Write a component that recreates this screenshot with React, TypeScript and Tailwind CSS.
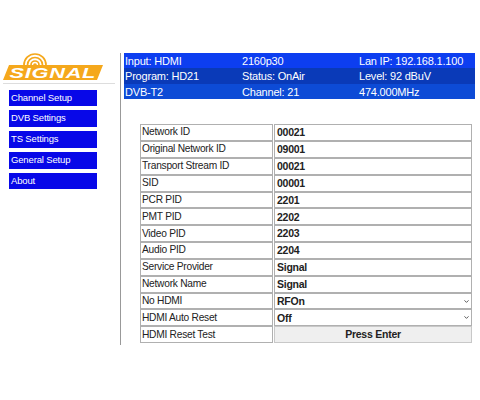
import React from 'react';
import { ChevronDown } from 'lucide-react';

const menu = ['Channel Setup', 'DVB Settings', 'TS Settings', 'General Setup', 'About'];

const status = [
  { bg: 'bg-[#0d3ef0]', cells: ['Input: HDMI', '2160p30', 'Lan IP: 192.168.1.100'] },
  { bg: 'bg-[#0a3ab8]', cells: ['Program: HD21', 'Status: OnAir', 'Level: 92 dBuV'] },
  { bg: 'bg-[#0d4bd6]', cells: ['DVB-T2', 'Channel: 21', '474.000MHz'] },
];

const rows = [
  { label: 'Network ID', value: '00021' },
  { label: 'Original Network ID', value: '09001' },
  { label: 'Transport Stream ID', value: '00021' },
  { label: 'SID', value: '00001' },
  { label: 'PCR PID', value: '2201' },
  { label: 'PMT PID', value: '2202' },
  { label: 'Video PID', value: '2203' },
  { label: 'Audio PID', value: '2204' },
  { label: 'Service Provider', value: 'Signal' },
  { label: 'Network Name', value: 'Signal' },
  { label: 'No HDMI', value: 'RFOn', select: true },
  { label: 'HDMI Auto Reset', value: 'Off', select: true },
  { label: 'HDMI Reset Test', value: 'Press Enter', button: true },
];

const Logo = () => (
  <div className="relative h-[27px] w-[100px]">
    <svg className="absolute left-[20px] top-0" width="24" height="12" viewBox="0 0 24 12" fill="none" stroke="#f5a81c" strokeWidth="1.7">
      <path d="M1 12a11 11 0 0 1 22 0" />
      <path d="M4.5 12a7.5 7.5 0 0 1 15 0" />
      <path d="M8 12a4 4 0 0 1 8 0" />
      <path d="M11 12a1 1 0 0 1 2 0" />
    </svg>
    <div className="absolute bottom-0 left-0 flex h-[15px] w-[100px] items-center justify-center bg-[#f5a81c] [clip-path:polygon(6%_0,100%_0,94%_100%,0_100%)]">
      <span className="scale-x-[1.45] text-[15px] leading-none font-bold italic tracking-[0.5px] text-white">SIGNAL</span>
    </div>
  </div>
);

export default function App() {
  return (
    <div className="flex h-[400px] w-[480px] bg-white pt-[53px] font-['Liberation_Sans',Arial,sans-serif] text-[10.2px] tracking-[-0.25px] text-[#222]">
      <div className="w-[120px] shrink-0">
        <div className="ml-[3px]">
          <Logo />
        </div>
        <div className="mt-[3px] ml-[3px] h-px w-[112px] bg-[#ddd]" />
        <div className="mt-[5.5px] ml-[9px] flex w-[88px] flex-col gap-[4.35px]">
          {menu.map((item) => (
            <div key={item} className="flex h-[16.5px] items-center bg-[#0808e8] px-[2px] text-[9.5px] tracking-[-0.15px] text-white">
              {item}
            </div>
          ))}
        </div>
      </div>

      <div className="h-[292px] flex-1 border-l border-[#999] pl-[3px]">
        <div className="w-[351px] text-[11px] tracking-[-0.2px] text-white">
          {status.map((row) => (
            <div key={row.cells[0]} className={`grid h-[15.4px] grid-cols-[117px_117px_1fr] items-center px-[1px] ${row.bg}`}>
              {row.cells.map((cell) => (
                <span key={cell}>{cell}</span>
              ))}
            </div>
          ))}
        </div>

        <div className="mt-[25px] ml-[16px] grid w-[332px] auto-rows-[16.85px] grid-cols-[133px_1fr] gap-x-[1px]">
          {rows.map((row) => (
            <React.Fragment key={row.label}>
              <div className="flex items-center border border-[#b0b0b0] pl-[1px] leading-none">{row.label}</div>
              {row.button ? (
                <div className="flex items-center justify-center border border-[#c8c8c8] bg-[#efefef] text-[10.5px] font-bold leading-none">{row.value}</div>
              ) : (
                <div className="flex items-center justify-between border border-[#b0b0b0] pl-[2px] pr-[1px] text-[10.5px] font-bold leading-none">
                  <span>{row.value}</span>
                  {row.select && <ChevronDown size={7} strokeWidth={3} className="text-[#444]" />}
                </div>
              )}
            </React.Fragment>
          ))}
        </div>
      </div>
    </div>
  );
}
